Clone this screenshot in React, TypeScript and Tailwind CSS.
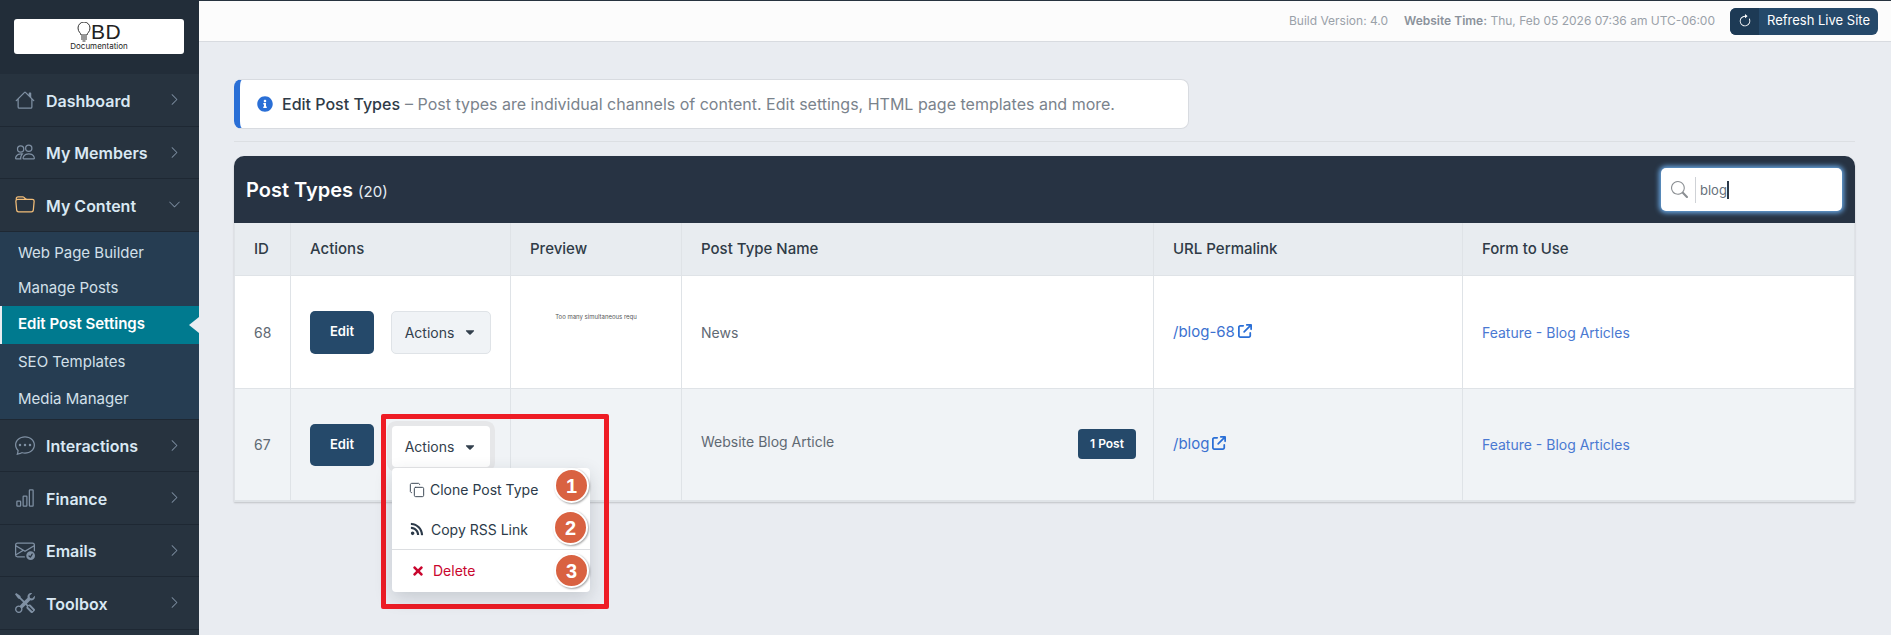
import type { ReactNode } from "react";
import {
  BsArrowClockwise,
  BsBarChart,
  BsChatDots,
  BsChevronDown,
  BsChevronRight,
  BsEnvelopeCheck,
  BsFolder,
  BsHouse,
  BsPeople,
  BsSearch,
  BsTools,
} from "react-icons/bs";
import { FaCaretDown, FaInfoCircle, FaRss, FaTimes } from "react-icons/fa";
import { FaArrowUpRightFromSquare } from "react-icons/fa6";
import { Copy } from "lucide-react";

const topItems = [
  { label: "Dashboard", icon: <BsHouse /> },
  { label: "My Members", icon: <BsPeople /> },
];

const bottomItems = [
  { label: "Interactions", icon: <BsChatDots /> },
  { label: "Finance", icon: <BsBarChart /> },
  { label: "Emails", icon: <BsEnvelopeCheck /> },
  { label: "Toolbox", icon: <BsTools /> },
];

const subItems = [
  { label: "Web Page Builder", height: "h-[34px]" },
  { label: "Manage Posts", height: "h-[35px]" },
  { label: "Edit Post Settings", height: "h-[38px]", active: true },
  { label: "SEO Templates", height: "h-[37px]" },
  { label: "Media Manager", height: "h-[38px]" },
];

const gridCols = "grid grid-cols-[56px_220px_171px_472px_309px_1fr]";

const MenuItem = ({ label, icon, open }: { label: string; icon: ReactNode; open?: boolean }) => (
  <div className="flex h-[52.5px] items-center border-b border-[#1e2833] pl-[15px] pr-[18px]">
    <span className={`w-[31px] text-[20px] ${open ? "text-[#f2bd78]" : "text-[#7f90a3]"}`}>{icon}</span>
    <span className="flex-1 pt-[2px] text-[16px] font-semibold text-[#d9e8f3]">{label}</span>
    <span className="text-[13px] text-[#7f90a3]">{open ? <BsChevronDown /> : <BsChevronRight />}</span>
  </div>
);

const Sidebar = () => (
  <aside className="flex h-full w-[199px] shrink-0 flex-col bg-[#27333f]">
    <div className="flex h-[74px] shrink-0 items-start bg-[#222d39] px-[14px] pt-[19px]">
      <div className="flex h-[35px] w-[170px] flex-col items-center rounded-[3px] bg-white pt-[2px] text-[#222]">
        <div className="flex h-[21px] items-center">
          <svg viewBox="0 0 14 20" className="h-[20px] w-[14px]" fill="none" stroke="#333" strokeWidth="1">
            <path d="M4 13c0-2-3-3-3-7a6 6 0 0 1 12 0c0 4-3 5-3 7z" />
            <path d="M4 15h6M4 17h6M5.5 19h3" />
          </svg>
          <span className="text-[21px] leading-none tracking-[0.5px] [font-family:'Liberation_Sans',sans-serif]">BD</span>
        </div>
        <span className="text-[8px] leading-[9px]">Documentation</span>
      </div>
    </div>
    {topItems.map((item) => (
      <MenuItem key={item.label} label={item.label} icon={item.icon} />
    ))}
    <MenuItem label="My Content" icon={<BsFolder />} open />
    <div className="shrink-0 border-b border-[#1e2833] bg-[#263d52] pt-[5px] text-[15px] text-[#d3e0ea]">
      {subItems.map((item) =>
        item.active ? (
          <div
            key={item.label}
            className={`relative flex items-center border-l-2 border-[#e9ecf1] bg-[#007a8f] pl-4 font-semibold text-white ${item.height}`}
          >
            {item.label}
            <span className="absolute right-0 top-[11px] h-0 w-0 border-y-[8px] border-r-[10px] border-y-transparent border-r-[#e9ecf1]" />
          </div>
        ) : (
          <div key={item.label} className={`flex items-center pl-[18px] ${item.height}`}>
            {item.label}
          </div>
        ),
      )}
    </div>
    {bottomItems.map((item) => (
      <MenuItem key={item.label} label={item.label} icon={item.icon} />
    ))}
  </aside>
);

const TopBar = () => (
  <header className="flex h-[42px] shrink-0 items-center justify-end border-b border-t border-b-[#d8dbe0] border-t-[#27333f] bg-[#fcfcfc] pr-[13px] text-[12px] text-[#9aa1a9]">
    <span>Build Version: 4.0</span>
    <span className="ml-[16px]">
      <b className="font-semibold text-[#8b929b]">Website Time:</b> Thu, Feb 05 2026 07:36 am UTC-06:00
    </span>
    <button className="ml-[15px] flex h-[27px] w-[148px] overflow-hidden rounded-[6px] bg-[#25496a] text-[13px] text-white">
      <span className="flex h-full w-[29px] items-center justify-center bg-[#1d3a55] text-[14px]">
        <BsArrowClockwise />
      </span>
      <span className="flex h-full flex-1 items-center justify-center">Refresh Live Site</span>
    </button>
  </header>
);

const Badge = ({ n, className }: { n: number; className: string }) => (
  <span
    className={`absolute flex h-[35px] w-[35px] items-center justify-center rounded-full border-2 border-white bg-[#d96241] text-[20px] font-bold text-white shadow-[1px_1px_2px_rgba(0,0,0,0.35)] [font-family:'Liberation_Sans',sans-serif] ${className}`}
  >
    {n}
  </span>
);

const ActionsDropdown = () => (
  <div className="absolute left-0 top-0 z-10">
    <div className="absolute left-[-11px] top-[-12px] h-[195px] w-[228px] rounded-[2px] border-[5px] border-[#ee1c25]" />
    <div className="flex h-[41px] w-[98px] items-center justify-center gap-[9px] rounded-[4px] bg-white text-[14px] text-[#33404d] shadow-[0_0_0_5px_#e6e7e9]">
      Actions
      <FaCaretDown className="text-[14px]" />
    </div>
    <div className="relative mt-[1px] h-[124px] w-[198px] rounded-[4px] bg-white text-[14px] text-[#2c3a49] shadow-[0_6px_18px_rgba(40,50,60,0.18)]">
      <div className="flex h-[41px] items-center pl-[17px] pt-[2px]">
        <Copy className="mr-[5px] h-[16px] w-[16px] text-[#3f4b58]" strokeWidth={1.5} />
        Clone Post Type
      </div>
      <div className="flex h-[41px] items-center border-b border-[#dcdee1] pl-[18px]">
        <FaRss className="mr-[7px] text-[14px] text-[#2c3a49]" />
        Copy RSS Link
      </div>
      <div className="flex h-[41px] items-center pl-[19px] text-[#c9062e]">
        <FaTimes className="mr-[8px] text-[14px]" />
        Delete
      </div>
      <Badge n={1} className="left-[162px] top-[0px]" />
      <Badge n={2} className="left-[161px] top-[42px]" />
      <Badge n={3} className="left-[162px] top-[85px]" />
    </div>
  </div>
);

const ExternalLink = ({ label }: { label: string }) => (
  <span className="flex items-center gap-[3px] text-[15px] text-[#3b71d0]">
    {label}
    <FaArrowUpRightFromSquare className="mb-[3px] text-[14px] text-[#2a6fd6]" />
  </span>
);

const cell = "flex h-full items-center border-r border-[#dfe3e7] px-[19px]";

const PostTypesTable = () => (
  <section className="mt-[14px] overflow-hidden rounded-t-[10px] shadow-[0_1px_2px_rgba(0,0,0,0.18)]">
    <div className="flex h-[67px] items-center justify-between bg-[#273343] pl-[12px] pr-[13px]">
      <h2 className="text-[20px] font-semibold text-white">
        Post Types <span className="text-[15px] font-normal text-[#e6edf3]">(20)</span>
      </h2>
      <div className="flex h-[43px] w-[181px] items-center rounded-[5px] bg-white pl-[10px] shadow-[0_0_5px_2px_#6aa9e6]">
        <BsSearch className="text-[17px] text-[#8b8f93]" />
        <span className="ml-[7px] h-[26px] border-l border-[#cfd2d6]" />
        <span className="ml-1 border-r-2 border-[#2c3a49] text-[13px] leading-[18px] text-[#66707a]">blog</span>
      </div>
    </div>

    <div className={`${gridCols} h-[52px] border-l border-[#dfe3e7] bg-[#e8ecf0] text-[15px] font-medium text-[#2f3b47]`}>
      {["ID", "Actions", "Preview", "Post Type Name", "URL Permalink", "Form to Use"].map((h) => (
        <div key={h} className={cell}>
          {h}
        </div>
      ))}
    </div>

    <div className={`${gridCols} h-[113px] border-l border-t border-[#dfe3e7] bg-white text-[14px] text-[#5f6973]`}>
      <div className={cell}>68</div>
      <div className={`${cell} gap-[17px]`}>
        <button className="h-[43px] w-[64px] rounded-[5px] bg-[#25496a] text-[13px] font-semibold text-white">Edit</button>
        <button className="flex h-[43px] w-[100px] items-center justify-center gap-[9px] rounded-[5px] border border-[#dfe3e7] bg-[#f0f3f6] text-[14px] text-[#33404d]">
          Actions
          <FaCaretDown className="text-[14px]" />
        </button>
      </div>
      <div className={`${cell} items-start justify-center pt-[36px] text-[6px] text-[#555]`}>Too many simultaneous requ</div>
      <div className={cell}>News</div>
      <div className={cell}>
        <ExternalLink label="/blog-68" />
      </div>
      <div className={`${cell} text-[#4a79d2]`}>Feature - Blog Articles</div>
    </div>

    <div className={`${gridCols} h-[114px] border-b-2 border-l border-t border-[#dfe3e7] bg-[#f0f3f6] text-[14px] text-[#5f6973]`}>
      <div className={cell}>67</div>
      <div className={`${cell} gap-[18px]`}>
        <button className="h-[42px] w-[64px] rounded-[5px] bg-[#25496a] text-[13px] font-semibold text-white">Edit</button>
        <div className="h-[41px] w-[98px]" />
      </div>
      <div className={cell} />
      <div className={`${cell} justify-between pb-[2px] pr-[17px]`}>
        <span className="mb-[5px]">Website Blog Article</span>
        <span className="mt-[1px] flex h-[30px] w-[58px] items-center justify-center rounded-[4px] bg-[#25496a] text-[12px] font-semibold text-white">
          1 Post
        </span>
      </div>
      <div className={cell}>
        <ExternalLink label="/blog" />
      </div>
      <div className={`${cell} text-[#4a79d2]`}>Feature - Blog Articles</div>
    </div>
  </section>
);

const App = () => (
  <div className="flex h-[635px] w-[1891px] overflow-hidden bg-[#e9ecf1] [font-family:Inter,'Noto_Sans',sans-serif]">
    <Sidebar />
    <main className="relative flex min-w-0 flex-1 flex-col">
      <TopBar />
      <div className="pl-[35px] pr-[36px] pt-[37px]">
        <div className="flex h-[50px] w-[955px] items-center rounded-[8px] border border-[#d8dbe0] border-l-[6px] border-l-[#2a6fd6] bg-white pl-[17px] text-[16px]">
          <FaInfoCircle className="mr-[9px] text-[16px] text-[#2a6fd6]" />
          <span className="font-medium text-[#2f3b47]">Edit Post Types</span>
          <span className="ml-[5px] text-[#7a838c]">– Post types are individual channels of content. Edit settings, HTML page templates and more.</span>
        </div>
        <hr className="mt-[12px] border-[#dcdfe3]" />
        <PostTypesTable />
      </div>
      <div className="absolute left-[193px] top-[426px]">
        <ActionsDropdown />
      </div>
    </main>
  </div>
);

export default App;
